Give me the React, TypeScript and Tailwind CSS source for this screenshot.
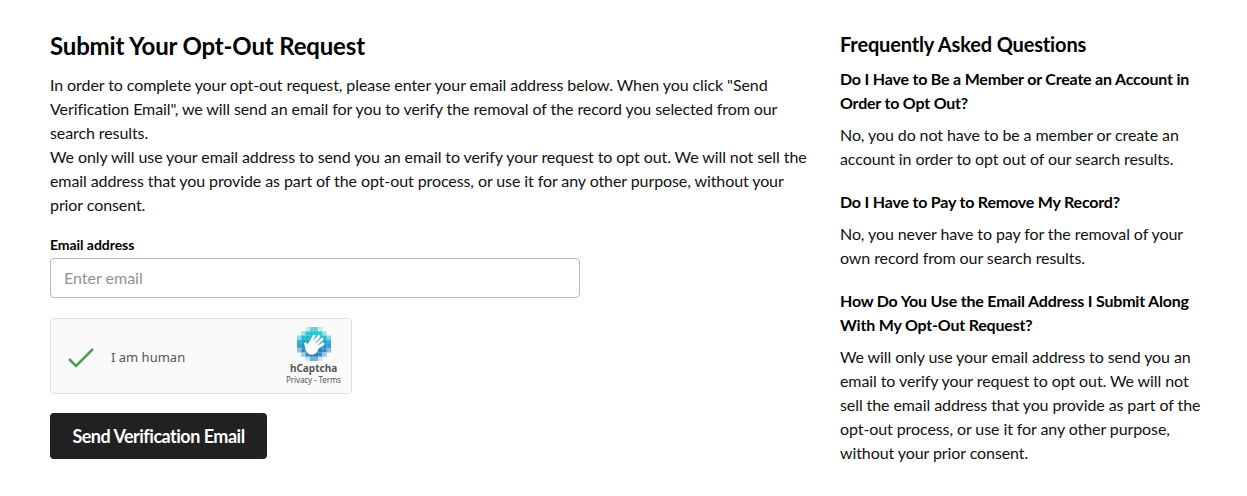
const logoCells: [number, number, string][] = [
  [2, 0, '#c4eef0'], [3, 0, '#62d6dc'], [4, 0, '#62d6dc'], [5, 0, '#c4eef0'],
  [1, 1, '#9fe2e6'], [2, 1, '#33c6d2'], [3, 1, '#25c0d0'], [4, 1, '#25c0d0'], [5, 1, '#33c6d2'], [6, 1, '#9fe2e6'],
  [0, 2, '#8fdce4'], [1, 2, '#2abcd0'], [2, 2, '#1fb6ce'], [3, 2, '#1fb6ce'], [4, 2, '#1fb4ce'], [5, 2, '#1fb4ce'], [6, 2, '#2ab8d0'], [7, 2, '#8fd8e4'],
  [0, 3, '#3ab4d0'], [1, 3, '#1ca8ca'], [2, 3, '#1ca8ca'], [3, 3, '#1ca8ca'], [4, 3, '#1ca4ca'], [5, 3, '#1ca4ca'], [6, 3, '#1ca4ca'], [7, 3, '#3aaed0'],
  [0, 4, '#3aa4cc'], [1, 4, '#1c98c6'], [2, 4, '#1c98c6'], [3, 4, '#1c98c6'], [4, 4, '#1c94c4'], [5, 4, '#1c94c4'], [6, 4, '#1c94c4'], [7, 4, '#3a9ecc'],
  [0, 5, '#8cc4e0'], [1, 5, '#2a8ec2'], [2, 5, '#1a88be'], [3, 5, '#1a88be'], [4, 5, '#1a84bc'], [5, 5, '#1a84bc'], [6, 5, '#2a8ac2'], [7, 5, '#8cbede'],
  [1, 6, '#a0cae4'], [2, 6, '#3a8cc4'], [3, 6, '#2a80be'], [4, 6, '#2a80be'], [5, 6, '#3a8cc4'], [6, 6, '#a0cae4'],
  [2, 7, '#cfe2f0'], [3, 7, '#7ab0d8'], [4, 7, '#7ab0d8'], [5, 7, '#cfe2f0'],
];

function HCaptchaLogo() {
  return (
    <svg width="34" height="34" viewBox="0 0 32 32">
      {logoCells.map(([x, y, c]) => (
        <rect key={`${x}-${y}`} x={x * 4} y={y * 4} width="4.05" height="4.05" fill={c} />
      ))}
      <circle cx="14" cy="20" r="6" fill="#ffffff" />
      <g stroke="#ffffff" strokeWidth="2.7" strokeLinecap="round" fill="none">
        <path d="M12 16 L16 8.5" />
        <path d="M14.5 16 L20.5 9" />
        <path d="M17 17.5 L23.5 11.5" />
        <path d="M18 20 L24.5 16" />
        <path d="M10 21 L8 16" />
      </g>
    </svg>
  );
}

function FaqItem({ question, answer }: { question: string; answer: string }) {
  return (
    <div className="mb-[19px]">
      <h3 className="text-base leading-6 font-bold text-black tracking-[-0.2px] mb-2">{question}</h3>
      <p className="text-base leading-6 tracking-[-0.09px]">{answer}</p>
    </div>
  );
}

export default function App() {
  return (
    <div className="h-[496px] w-[1247px] overflow-hidden bg-white font-['Lato',sans-serif] text-[#111] pt-[30px] pl-[50px] flex">
      {/* Form */}
      <div className="w-[760px] shrink-0">
        <h2 className="text-2xl leading-[32px] font-bold text-black tracking-[-0.17px] mb-[11px]">Submit Your Opt-Out Request</h2>
        <p className="text-base leading-6 tracking-[-0.09px]">
          In order to complete your opt-out request, please enter your email address below. When you click "Send Verification Email", we will send an email for you to verify the removal of the record you selected from our search results.
        </p>
        <p className="text-base leading-6 tracking-[-0.09px] mb-[18px]">
          We only will use your email address to send you an email to verify your request to opt out. We will not sell the email address that you provide as part of the opt-out process, or use it for any other purpose, without your prior consent.
        </p>
        <label className="block text-sm leading-5 font-bold text-black tracking-[-0.05px] mb-[3px]">Email address</label>
        <input
          placeholder="Enter email"
          className="block w-[530px] h-10 rounded border border-[#b9b9b9] px-[13px] pb-[2px] text-base placeholder:text-[#8f9299] outline-none"
        />
        <div className="mt-[20px] w-[302px] h-[76px] rounded border border-[#e0e0e0] bg-[#fafafa] flex items-center">
          <svg width="28" height="24" viewBox="0 0 28 24" className="ml-[16px]" fill="none">
            <path d="M2 15 L9 22 L26 5" stroke="#4a9e5c" strokeWidth="2.5" />
          </svg>
          <span className="ml-[16px] mt-[4px] text-[13px] tracking-[0px] text-[#555] font-['Noto_Sans',sans-serif]">I am human</span>
          <div className="ml-auto mr-[10px] mb-[1px] flex flex-col items-center">
            <HCaptchaLogo />
            <span className="text-[10px] leading-[13px] mt-[1px] font-bold text-[#555] font-['Noto_Sans',sans-serif]">hCaptcha</span>
            <span className="text-[8px] leading-[10px] tracking-[-0.1px] text-[#555] font-['Noto_Sans',sans-serif]">Privacy - Terms</span>
          </div>
        </div>
        <button className="mt-[19px] h-[46px] w-[217px] rounded bg-[#212121] text-white text-lg font-bold tracking-[-0.5px]">
          Send Verification Email
        </button>
      </div>

      {/* FAQ */}
      <div className="ml-[30px] w-[365px] shrink-0 pt-px">
        <h3 className="text-xl leading-[26px] font-bold text-black tracking-[-0.15px] mb-[10px]">Frequently Asked Questions</h3>
        <FaqItem
          question="Do I Have to Be a Member or Create an Account in Order to Opt Out?"
          answer="No, you do not have to be a member or create an account in order to opt out of our search results."
        />
        <FaqItem
          question="Do I Have to Pay to Remove My Record?"
          answer="No, you never have to pay for the removal of your own record from our search results."
        />
        <FaqItem
          question="How Do You Use the Email Address I Submit Along With My Opt-Out Request?"
          answer="We will only use your email address to send you an email to verify your request to opt out. We will not sell the email address that you provide as part of the opt-out process, or use it for any other purpose, without your prior consent."
        />
      </div>
    </div>
  );
}
